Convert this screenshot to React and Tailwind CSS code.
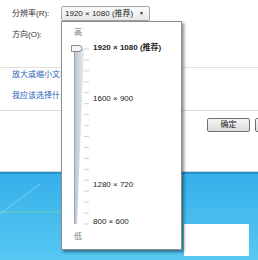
export default function App() {
  const ticks = [];
  for (let i = 0; i <= 16; i++) ticks.push(10 + (175 * i) / 16);

  return (
    <div className="relative w-[258px] h-[260px] overflow-hidden bg-white font-['Liberation_Sans','Noto_Sans_CJK_SC',sans-serif] text-[8px] text-[#333]">
      {/* dialog body */}
      <div className="h-[172px] flex flex-col pt-[6px] border-b border-[#c9d3dc]">
        <div className="flex items-center h-[15px]">
          <span className="w-[61px] pl-[12px] leading-none">分辨率(R):</span>
          <div className="w-[89px] h-[15px] flex items-center justify-between pl-[3px] pr-[5px] border border-[#a3a3a3] rounded-[2px] bg-gradient-to-b from-[#fbfbfb] to-[#e9e9e9] text-[#222]">
            <span className="leading-none">1920 × 1080 (推荐)</span>
            <span className="text-[5px] leading-none">▼</span>
          </div>
        </div>
        <div className="flex items-center h-[12px] mt-[8px] pl-[12px] leading-none">方向(O):</div>
        <div className="h-px mt-[26px] bg-[#e1e1e1]" />
        <div className="w-[61px] overflow-hidden h-[12px] mt-[1px] pl-[12px] flex items-center text-[#2b63b8] leading-none whitespace-nowrap">放大或缩小文本和其他项目</div>
        <div className="w-[61px] overflow-hidden h-[12px] mt-[9px] pl-[12px] flex items-center text-[#2b63b8] leading-none whitespace-nowrap">我应该选择什么显示器设置?</div>
        <div className="h-px mt-[8px] bg-[#dcdcdc]" />
        <div className="flex mt-[7px] pl-[207px] gap-[5px]">
          <div className="w-[43px] h-[14px] shrink-0 flex items-center justify-center border border-[#707070] rounded-[2px] bg-gradient-to-b from-[#f4f4f4] to-[#dcdcdc] text-[#222] leading-none">确定</div>
          <div className="w-[43px] h-[14px] shrink-0 border border-[#707070] rounded-[2px] bg-gradient-to-b from-[#f4f4f4] to-[#dcdcdc]" />
        </div>
      </div>

      {/* desktop */}
      <div className="relative h-[88px] border-t-2 border-[#2490d0] bg-gradient-to-b from-[#36b0ea] to-[#56c9f3] flex justify-end pt-[50px] pr-[9px]">
        <svg className="absolute left-0 top-0" width="258" height="86">
          <line x1="0" y1="40" x2="40" y2="10" stroke="#8fd9f7" strokeWidth="1" opacity="0.7" />
          <line x1="0" y1="38" x2="62" y2="38" stroke="#7fdc9c" strokeWidth="1" opacity="0.6" />
        </svg>
        <div className="relative w-[65px] h-[32px] bg-white" />
      </div>

      {/* resolution popup */}
      <div className="absolute left-[61px] top-[21px] w-[121px] h-[229px] bg-white border border-[#8e8e8e] shadow-[2px_2px_3px_rgba(0,0,0,0.45)] flex">
        <div className="flex flex-col pl-[9px] pt-[5px] w-[31px]">
          <span className="h-[12px] pl-[3px] flex items-center text-[#777] leading-none">高</span>
          <svg width="20" height="186">
            <defs>
              <linearGradient id="trk" x1="0" x2="1" y1="0" y2="0">
                <stop offset="0" stopColor="#b9c4cf" />
                <stop offset="1" stopColor="#e6ebf0" />
              </linearGradient>
            </defs>
            <polygon points="3,10 13,10 6,185 3,185" fill="url(#trk)" />
            <line x1="3.5" y1="10" x2="3.5" y2="185" stroke="#9aa6b2" strokeWidth="1" />
            {ticks.map((y, i) => (
              <line key={i} x1="13" y1={y} x2="18" y2={y} stroke="#d2d2d2" strokeWidth="1" />
            ))}
            <path d="M0.5,6.5 H8 A3,3 0 0 1 8,12.5 H0.5 Z" fill="#f6f6f6" stroke="#8a8a8a" strokeWidth="1" />
          </svg>
          <span className="h-[12px] mt-[6px] pl-[3px] flex items-center text-[#777] leading-none">低</span>
        </div>
        <div className="flex flex-col text-[#222] whitespace-nowrap">
          <span className="h-[10px] mt-[21px] flex items-center font-bold leading-none">1920 × 1080 (推荐)</span>
          <span className="h-[10px] mt-[41px] flex items-center leading-none">1600 × 900</span>
          <span className="h-[10px] mt-[76px] flex items-center leading-none">1280 × 720</span>
          <span className="h-[10px] mt-[27px] flex items-center leading-none">800 × 600</span>
        </div>
      </div>
    </div>
  );
}
